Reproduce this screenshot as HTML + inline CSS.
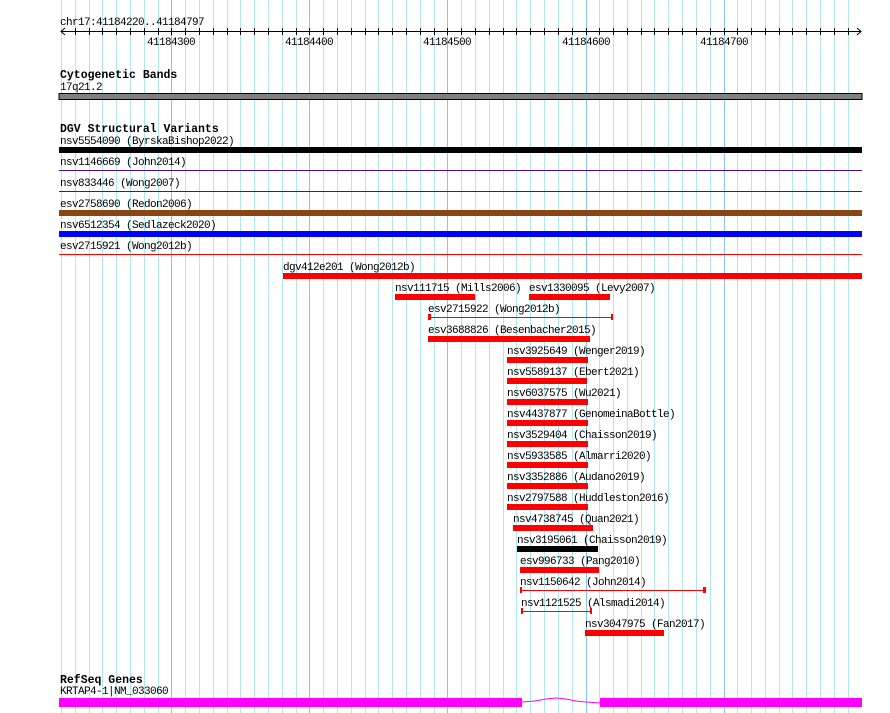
<!DOCTYPE html>
<html><head><meta charset="utf-8"><style>
html,body{margin:0;padding:0;background:#fff;width:890px;height:713px;overflow:hidden}
svg{display:block}
text{font-family:"Liberation Mono",monospace;font-size:11px;letter-spacing:-0.6px;fill:#000}
.b{font-weight:bold;font-size:11.5px;letter-spacing:0}
</style></head><body>
<svg width="890" height="713" xmlns="http://www.w3.org/2000/svg">
<path stroke="#b0e8f0" stroke-width="1" fill="none" d="M61.5 0V713M75.5 0V713M89.5 0V713M102.5 0V713M116.5 0V713M130.5 0V713M144.5 0V713M158.5 0V713M185.5 0V713M199.5 0V713M213.5 0V713M227.5 0V713M240.5 0V713M254.5 0V713M268.5 0V713M282.5 0V713M296.5 0V713M323.5 0V713M337.5 0V713M351.5 0V713M365.5 0V713M378.5 0V713M392.5 0V713M406.5 0V713M420.5 0V713M434.5 0V713M461.5 0V713M475.5 0V713M489.5 0V713M503.5 0V713M516.5 0V713M530.5 0V713M544.5 0V713M558.5 0V713M572.5 0V713M599.5 0V713M613.5 0V713M627.5 0V713M641.5 0V713M654.5 0V713M668.5 0V713M682.5 0V713M696.5 0V713M710.5 0V713M737.5 0V713M751.5 0V713M765.5 0V713M779.5 0V713M792.5 0V713M806.5 0V713M820.5 0V713M834.5 0V713M848.5 0V713"/>
<path stroke="#88c4f0" stroke-width="1" fill="none" d="M171.5 0V713M309.5 0V713M447.5 0V713M586.5 0V713M724.5 0V713"/>
<path stroke="#000" stroke-width="1" fill="none" d="M75.5 28V35M89.5 28V35M102.5 28V35M116.5 28V35M130.5 28V35M144.5 28V35M158.5 28V35M171.5 28V35M185.5 28V35M199.5 28V35M213.5 28V35M227.5 28V35M240.5 28V35M254.5 28V35M268.5 28V35M282.5 28V35M296.5 28V35M309.5 28V35M323.5 28V35M337.5 28V35M351.5 28V35M365.5 28V35M378.5 28V35M392.5 28V35M406.5 28V35M420.5 28V35M434.5 28V35M447.5 28V35M461.5 28V35M475.5 28V35M489.5 28V35M503.5 28V35M516.5 28V35M530.5 28V35M544.5 28V35M558.5 28V35M572.5 28V35M586.5 28V35M599.5 28V35M613.5 28V35M627.5 28V35M641.5 28V35M654.5 28V35M668.5 28V35M682.5 28V35M696.5 28V35M710.5 28V35M724.5 28V35M737.5 28V35M751.5 28V35M765.5 28V35M779.5 28V35M792.5 28V35M806.5 28V35M820.5 28V35M834.5 28V35M848.5 28V35"/>
<text x="60" y="25">chr17:41184220..41184797</text>
<line x1="61" y1="31.5" x2="861" y2="31.5" stroke="#000"/>
<polyline points="65,28 61,31.5 65,35" fill="none" stroke="#000"/>
<polyline points="857,28 861,31.5 857,35" fill="none" stroke="#000"/>
<text x="147" y="45">41184300</text><text x="285" y="45">41184400</text><text x="423" y="45">41184500</text><text x="562" y="45">41184600</text><text x="700" y="45">41184700</text>

<text class="b" x="60" y="78">Cytogenetic Bands</text>
<text x="60" y="90">17q21.2</text>
<rect x="59" y="93.5" width="803" height="6" fill="#808080" stroke="#000"/>

<text class="b" x="60" y="132">DGV Structural Variants</text>
<text x="60" y="144">nsv5554090 (ByrskaBishop2022)</text>
<rect x="59" y="147" width="803" height="6" fill="#000"/>
<text x="60" y="165">nsv1146669 (John2014)</text>
<rect x="59" y="170" width="803" height="1" fill="#4b0b9a"/>
<text x="60" y="186">nsv833446 (Wong2007)</text>
<rect x="59" y="191" width="803" height="1" fill="#1a2a8a"/>
<text x="60" y="207">esv2758690 (Redon2006)</text>
<rect x="59" y="210" width="803" height="6" fill="#8b4513"/>
<text x="60" y="228">nsv6512354 (Sedlazeck2020)</text>
<rect x="59" y="231" width="803" height="6" fill="#0000ff"/>
<text x="60" y="249">esv2715921 (Wong2012b)</text>
<rect x="59" y="254" width="803" height="1" fill="#f00"/>

<text x="283" y="270">dgv412e201 (Wong2012b)</text>
<rect x="283" y="273" width="579" height="6" fill="#f00"/>
<text x="395" y="291">nsv111715 (Mills2006)</text>
<rect x="395" y="294" width="80" height="6" fill="#f00"/>
<text x="529" y="291">esv1330095 (Levy2007)</text>
<rect x="529" y="294" width="81" height="6" fill="#f00"/>
<text x="428" y="312">esv2715922 (Wong2012b)</text>
<rect x="428" y="317" width="184" height="1" fill="#f00"/><rect x="428" y="314" width="3" height="6" fill="#f00"/><rect x="611" y="314" width="2" height="6" fill="#f00"/>
<text x="428" y="333">esv3688826 (Besenbacher2015)</text>
<rect x="428" y="336" width="162" height="6" fill="#f00"/>
<text x="507" y="354">nsv3925649 (Wenger2019)</text><rect x="507" y="357" width="81" height="6" fill="#f00"/>
<text x="507" y="375">nsv5589137 (Ebert2021)</text><rect x="507" y="378" width="80" height="6" fill="#f00"/>
<text x="507" y="396">nsv6037575 (Wu2021)</text><rect x="507" y="399" width="81" height="6" fill="#f00"/>
<text x="507" y="417">nsv4437877 (GenomeinaBottle)</text><rect x="507" y="420" width="81" height="6" fill="#f00"/>
<text x="507" y="438">nsv3529404 (Chaisson2019)</text><rect x="507" y="441" width="81" height="6" fill="#f00"/>
<text x="507" y="459">nsv5933585 (Almarri2020)</text><rect x="507" y="462" width="81" height="6" fill="#f00"/>
<text x="507" y="480">nsv3352886 (Audano2019)</text><rect x="507" y="483" width="81" height="6" fill="#f00"/>
<text x="507" y="501">nsv2797588 (Huddleston2016)</text><rect x="507" y="504" width="81" height="6" fill="#f00"/>
<text x="513" y="522">nsv4738745 (Quan2021)</text><rect x="513" y="525" width="80" height="6" fill="#f00"/>
<text x="517" y="543">nsv3195061 (Chaisson2019)</text><rect x="517" y="546" width="81" height="6" fill="#000"/>
<text x="520" y="564">esv996733 (Pang2010)</text><rect x="520" y="567" width="79" height="6" fill="#f00"/>
<text x="520" y="585">nsv1150642 (John2014)</text>
<rect x="520" y="590" width="186" height="1" fill="#f00"/><rect x="520" y="587" width="2" height="6" fill="#f00"/><rect x="703" y="587" width="3" height="6" fill="#f00"/>
<text x="521" y="606">nsv1121525 (Alsmadi2014)</text>
<rect x="521" y="611" width="70" height="1" fill="#f00"/><rect x="521" y="608" width="2" height="6" fill="#f00"/><rect x="590" y="608" width="2" height="6" fill="#f00"/>
<text x="585" y="627">nsv3047975 (Fan2017)</text><rect x="585" y="630" width="79" height="6" fill="#f00"/>

<text class="b" x="60" y="683">RefSeq Genes</text>
<text x="60" y="694">KRTAP4-1|NM_033060</text>
<rect x="59" y="698" width="463" height="9" fill="#f0f"/>
<rect x="600" y="698" width="262" height="9" fill="#f0f"/>
<polyline points="522,702 535,701 546,699 556,698 566,699 576,701 586,702 600,703" fill="none" stroke="#f0f"/>
</svg>
</body></html>
